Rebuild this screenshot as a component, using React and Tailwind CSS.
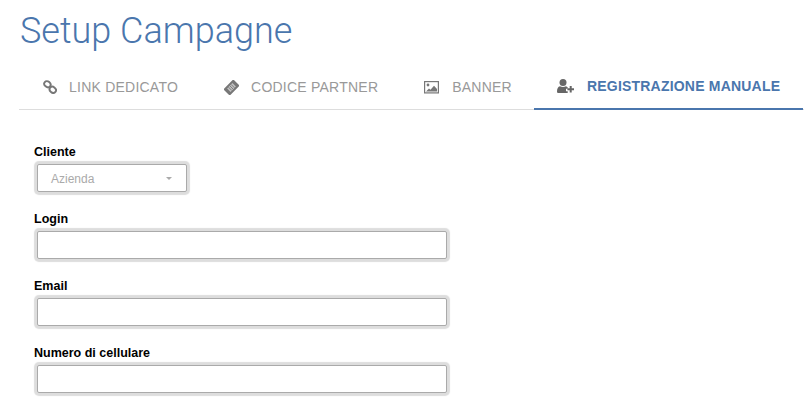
import React from "react";

// chain, two links on the diagonal
const LinkIcon = () => (
  <svg viewBox="0 0 14 14" className="w-[14px] h-[14px]" fill="none" stroke="currentColor" strokeWidth="1.9">
    <ellipse cx="4.4" cy="4.2" rx="3.4" ry="2.8" transform="rotate(40 4.4 4.2)" />
    <ellipse cx="9.8" cy="9.8" rx="3.4" ry="2.8" transform="rotate(40 9.8 9.8)" />
  </svg>
);

const TicketIcon = () => (
  <svg viewBox="0 0 16 16" className="w-[15px] h-[15px]">
    <g transform="rotate(-45 8 8)">
      <rect x="0.5" y="3.2" width="15" height="9.6" rx="1" fill="currentColor" />
      <rect x="4" y="5.4" width="8" height="5.2" fill="#ffffff" fillOpacity="0.55" />
      <path d="M6 5.4v5.2M8 5.4v5.2M10 5.4v5.2" stroke="currentColor" strokeWidth="0.9" />
    </g>
  </svg>
);

const ImageIcon = () => (
  <svg viewBox="0 0 15 15" className="w-[15px] h-[15px]">
    <rect x="0.6" y="1.6" width="13.8" height="11.3" fill="#ffffff" stroke="currentColor" strokeWidth="1.2" />
    <circle cx="4" cy="5" r="1.4" fill="currentColor" />
    <path d="M2 11.6 5 8.4l1.5 1.4L10 5.8l3 3.2v2.6z" fill="currentColor" />
  </svg>
);

const UserPlusIcon = () => (
  <svg viewBox="0 0 17 14" className="w-[17px] h-[14px]" fill="currentColor">
    <circle cx="6" cy="3.6" r="3.5" />
    <path d="M0 12.5C0 9.5 1 7.6 3 7.2c1.8 1 4.2 1 6 0 .7.2 1.3.5 1.7 1v1.6H9v2.4h1.7V14H1.2C.4 14 0 13.4 0 12.5z" />
    <path d="M12.7 7h2v2.2H17v2h-2.3v2.3h-2v-2.3h-2.3v-2h2.3z" />
  </svg>
);

const tabs = [
  { label: "LINK DEDICATO", icon: <LinkIcon />, gap: "mr-[12px]" },
  { label: "CODICE PARTNER", icon: <TicketIcon />, gap: "mr-[12px]" },
  { label: "BANNER", icon: <ImageIcon />, gap: "mr-[13px]" },
];

const fields = ["Login", "Email", "Numero di cellulare"];

export default function App() {
  return (
    <div className="w-[809px] h-[407px] overflow-hidden bg-white font-['Liberation_Sans',sans-serif]">
      {/* HEADER */}
      <h1 className="pl-5 pt-[10px] h-[64px] text-[36px] leading-[42px] font-light text-[#4a76ad] font-['Roboto',sans-serif]">
        Setup Campagne
      </h1>

      {/* TABS */}
      <div className="ml-[19px] w-[785px] h-[46px] flex border-b border-[#dddddd]">
        <div className="w-[1px] shrink-0" />
        {tabs.map((tab) => (
          <div key={tab.label} className="shrink-0 whitespace-nowrap h-[46px] px-[23px] flex items-center text-[14px] tracking-[0.23px] text-[#999999]">
            <span className={`text-[#777777] ${tab.gap}`}>{tab.icon}</span>
            {tab.label}
          </div>
        ))}
        <div className="-ml-[1px] shrink-0 whitespace-nowrap h-[46px] px-[23px] flex items-center text-[14px] font-bold tracking-[0.2px] text-[#4a76ad] border-b-2 border-[#4a76ad]">
          <span className="mr-[13px] text-[#666666]"><UserPlusIcon /></span>
          REGISTRAZIONE MANUALE
        </div>
      </div>

      {/* FORM */}
      <div className="pl-[34px] pt-[35px]">
        <label className="block text-[12.5px] leading-[15px] font-bold text-black">Cliente</label>
        <div className="ml-[3px] mt-[4px] w-[150px] h-[28px] pl-[13px] pr-[14px] pt-[1px] flex items-center justify-between bg-white border border-[#aaaaaa] rounded-[2px] shadow-[0_0_1px_3px_#dddddd] text-[12px] text-[#aaaaaa]">
          Azienda
          <span className="w-0 h-0 border-x-[3px] border-x-transparent border-t-[3px] border-t-[#aaaaaa]" />
        </div>

        {fields.map((field) => (
          <div key={field} className="mt-[20px]">
            <label className="block text-[12.5px] leading-[15px] font-bold text-black">{field}</label>
            <input
              type="text"
              className="block ml-[3px] mt-[4px] w-[410px] h-[28px] bg-white border border-[#aaaaaa] rounded-[2px] shadow-[0_0_1px_3px_#dddddd]"
            />
          </div>
        ))}
      </div>
    </div>
  );
}
